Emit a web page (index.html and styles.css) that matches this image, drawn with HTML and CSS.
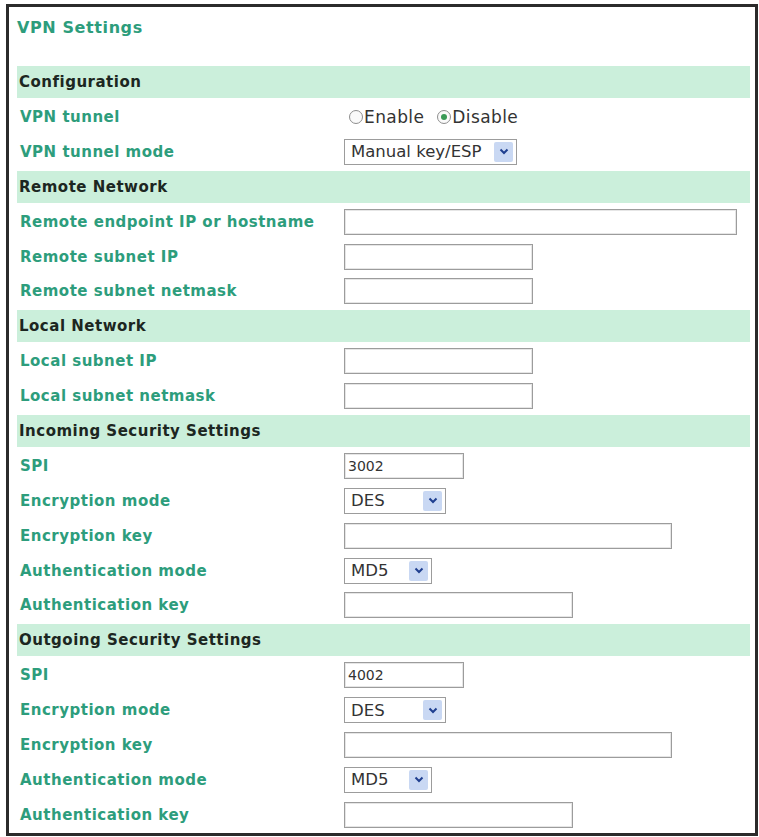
FILE: index.html
```html
<!DOCTYPE html>
<html lang="en">
<head>
  <meta charset="UTF-8">
  <title>VPN Settings</title>
  <link rel="stylesheet" href="styles.css">
</head>
<body>
  <div class="panel">
    <h1 class="title">VPN Settings</h1>

    <div class="form">
      <div class="band">Configuration</div>
      <div class="row">
        <label>VPN tunnel</label>
        <div class="radios">
          <span class="radio"></span><span class="radio-text">Enable</span>
          <span class="radio checked"></span><span class="radio-text">Disable</span>
        </div>
      </div>
      <div class="row">
        <label>VPN tunnel mode</label>
        <div class="select w-mode"><span class="value">Manual key/ESP</span><span class="arrow"><svg width="10" height="7" viewBox="0 0 10 7"><path d="M1.5 1.5 L5 5 L8.5 1.5" fill="none" stroke="#1f3f8f" stroke-width="2"/></svg></span></div>
      </div>

      <div class="band">Remote Network</div>
      <div class="row">
        <label>Remote endpoint IP or hostname</label>
        <input type="text" class="field w-xl">
      </div>
      <div class="row">
        <label>Remote subnet IP</label>
        <input type="text" class="field w-md">
      </div>
      <div class="row">
        <label>Remote subnet netmask</label>
        <input type="text" class="field w-md">
      </div>

      <div class="band">Local Network</div>
      <div class="row">
        <label>Local subnet IP</label>
        <input type="text" class="field w-md">
      </div>
      <div class="row">
        <label>Local subnet netmask</label>
        <input type="text" class="field w-md">
      </div>

      <div class="band">Incoming Security Settings</div>
      <div class="row">
        <label>SPI</label>
        <input type="text" class="field w-sm" value="3002">
      </div>
      <div class="row">
        <label>Encryption mode</label>
        <div class="select w-des"><span class="value">DES</span><span class="arrow"><svg width="10" height="7" viewBox="0 0 10 7"><path d="M1.5 1.5 L5 5 L8.5 1.5" fill="none" stroke="#1f3f8f" stroke-width="2"/></svg></span></div>
      </div>
      <div class="row">
        <label>Encryption key</label>
        <input type="text" class="field w-lg">
      </div>
      <div class="row">
        <label>Authentication mode</label>
        <div class="select w-md5"><span class="value">MD5</span><span class="arrow"><svg width="10" height="7" viewBox="0 0 10 7"><path d="M1.5 1.5 L5 5 L8.5 1.5" fill="none" stroke="#1f3f8f" stroke-width="2"/></svg></span></div>
      </div>
      <div class="row">
        <label>Authentication key</label>
        <input type="text" class="field w-key">
      </div>

      <div class="band">Outgoing Security Settings</div>
      <div class="row">
        <label>SPI</label>
        <input type="text" class="field w-sm" value="4002">
      </div>
      <div class="row">
        <label>Encryption mode</label>
        <div class="select w-des"><span class="value">DES</span><span class="arrow"><svg width="10" height="7" viewBox="0 0 10 7"><path d="M1.5 1.5 L5 5 L8.5 1.5" fill="none" stroke="#1f3f8f" stroke-width="2"/></svg></span></div>
      </div>
      <div class="row">
        <label>Encryption key</label>
        <input type="text" class="field w-lg">
      </div>
      <div class="row">
        <label>Authentication mode</label>
        <div class="select w-md5"><span class="value">MD5</span><span class="arrow"><svg width="10" height="7" viewBox="0 0 10 7"><path d="M1.5 1.5 L5 5 L8.5 1.5" fill="none" stroke="#1f3f8f" stroke-width="2"/></svg></span></div>
      </div>
      <div class="row">
        <label>Authentication key</label>
        <input type="text" class="field w-key">
      </div>
    </div>
  </div>
</body>
</html>
```

FILE: styles.css
```css
body {
  margin: 0;
  background: #fff;
  font-family: 'DejaVu Sans', Verdana, sans-serif;
}

.panel {
  box-sizing: border-box;
  width: 752px;
  height: 832px;
  margin: 4px 0 0 6px;
  padding: 0 5px 0 8px;
  border: 3px solid #2b2b2b;
}

.title {
  margin: 13px 0 30px 0;
  font-size: 16px;
  line-height: 16px;
  letter-spacing: 0.6px;
  font-weight: bold;
  color: #2d9d7c;
}

.form {
  display: flex;
  flex-direction: column;
  gap: 3px;
}

.band {
  height: 32px;
  line-height: 32px;
  padding-left: 2px;
  background: #cbefdb;
  font-size: 15px;
  letter-spacing: 0.5px;
  font-weight: bold;
  color: #1c2621;
}

.row {
  display: grid;
  grid-template-columns: 327px 1fr;
  align-items: center;
  height: 31.86px;
}

.row label {
  padding-left: 3px;
  font-size: 15px;
  letter-spacing: 0.5px;
  font-weight: bold;
  color: #2d9d7c;
}

/* text inputs */
.field {
  box-sizing: border-box;
  height: 26px;
  margin: 0;
  padding: 2px 3px;
  border: 1px solid #9c9c9c;
  box-shadow: inset 0 0 0 1px #e6e6e6;
  background: #fff;
  font-family: 'DejaVu Sans', Verdana, sans-serif;
  font-size: 14px;
  color: #333;
}

.w-xl { width: 393px; }
.w-lg { width: 328px; }
.w-key { width: 229px; }
.w-md { width: 189px; }
.w-sm { width: 120px; }

/* fake select boxes */
.select {
  box-sizing: border-box;
  display: flex;
  align-items: center;
  justify-content: space-between;
  height: 26px;
  padding: 2px 3px 2px 6px;
  border: 1px solid #9c9c9c;
  background: #fff;
  font-size: 16.5px;
  color: #333;
}

.select .arrow {
  display: flex;
  align-items: center;
  justify-content: center;
  width: 19px;
  height: 20px;
  background: #c9d8f3;
  border-radius: 2px;
}

.w-mode { width: 173px; }
.w-des { width: 102px; }
.w-md5 { width: 88px; }

/* radio buttons */
.radios {
  display: flex;
  align-items: center;
  font-size: 17px;
  letter-spacing: 0.4px;
  color: #333;
}

.radio {
  box-sizing: border-box;
  width: 14px;
  height: 14px;
  margin: 0 1px 0 5px;
  border: 1px solid #8e8e8e;
  border-radius: 50%;
  background: #fafafa;
  display: flex;
  align-items: center;
  justify-content: center;
}

.radio.checked::after {
  content: '';
  width: 6px;
  height: 6px;
  border-radius: 50%;
  background: #3a9a56;
}

.radio-text {
  margin-right: 8px;
}
```
